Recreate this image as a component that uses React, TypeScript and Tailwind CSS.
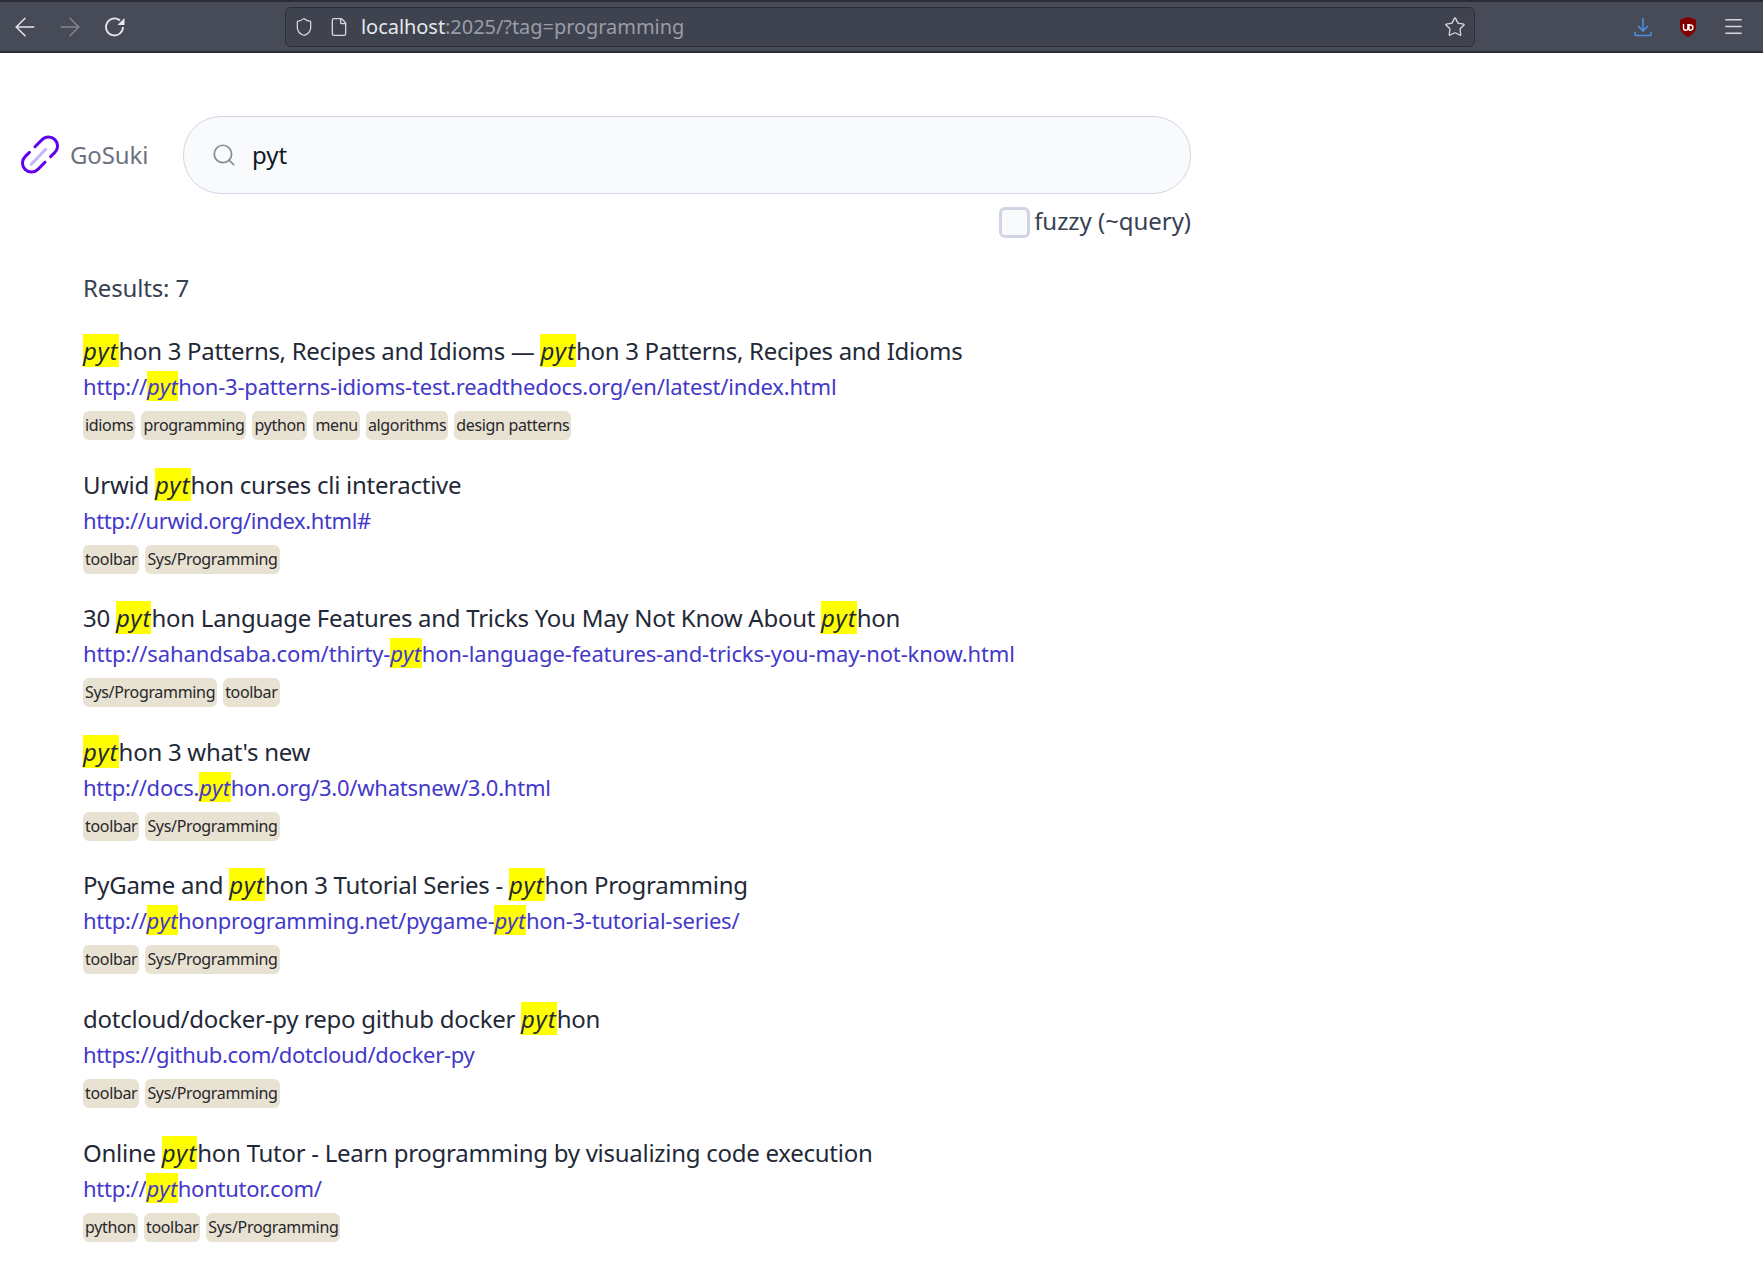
import React from 'react'
import { ArrowLeft, ArrowRight, Shield, File, Star, Menu, Search } from 'lucide-react'

const results = [
  {
    title: 'python 3 Patterns, Recipes and Idioms — python 3 Patterns, Recipes and Idioms',
    titleClass: 'tracking-[-0.32px]',
    url: 'http://python-3-patterns-idioms-test.readthedocs.org/en/latest/index.html',
    urlClass: 'tracking-[-0.2px]',
    tags: ['idioms', 'programming', 'python', 'menu', 'algorithms', 'design patterns'],
  },
  {
    title: 'Urwid python curses cli interactive',
    titleClass: 'tracking-[-0.27px]',
    url: 'http://urwid.org/index.html#',
    urlClass: 'tracking-[-0.38px]',
    tags: ['toolbar', 'Sys/Programming'],
  },
  {
    title: '30 python Language Features and Tricks You May Not Know About python',
    titleClass: 'tracking-[-0.27px]',
    url: 'http://sahandsaba.com/thirty-python-language-features-and-tricks-you-may-not-know.html',
    urlClass: 'tracking-[-0.13px]',
    tags: ['Sys/Programming', 'toolbar'],
  },
  {
    title: "python 3 what's new",
    titleClass: 'tracking-[-0.27px]',
    url: 'http://docs.python.org/3.0/whatsnew/3.0.html',
    urlClass: 'tracking-[-0.24px]',
    tags: ['toolbar', 'Sys/Programming'],
  },
  {
    title: 'PyGame and python 3 Tutorial Series - python Programming',
    titleClass: 'tracking-[-0.27px]',
    url: 'http://pythonprogramming.net/pygame-python-3-tutorial-series/',
    urlClass: 'tracking-[-0.24px]',
    tags: ['toolbar', 'Sys/Programming'],
  },
  {
    title: 'dotcloud/docker-py repo github docker python',
    titleClass: 'tracking-[-0.27px]',
    url: 'https://github.com/dotcloud/docker-py',
    urlClass: 'tracking-[-0.34px]',
    tags: ['toolbar', 'Sys/Programming'],
  },
  {
    title: 'Online python Tutor - Learn programming by visualizing code execution',
    titleClass: 'tracking-[-0.27px]',
    url: 'http://pythontutor.com/',
    urlClass: 'tracking-[-0.27px]',
    tags: ['python', 'toolbar', 'Sys/Programming'],
  },
]

function Highlight({ text, markClass }: { text: string; markClass: string }) {
  const parts = text.split(/(pyt(?=hon))/)
  return (
    <>
      {parts.map((p, i) =>
        p === 'pyt' ? (
          <mark key={i} className={`bg-[#ffff00] italic text-inherit ${markClass}`}>pyt</mark>
        ) : (
          <span key={i}>{p}</span>
        )
      )}
    </>
  )
}

function Toolbar() {
  return (
    <div className="flex h-[53px] items-center border-y-2 border-t-[#2b2e38] border-b-[#2b2e38] bg-[#474b58] pl-[10px] pr-[17px]">
      <ArrowLeft className="h-[30px] w-[30px] text-[#e5e7eb]" strokeWidth={1.2} />
      <ArrowRight className="ml-[15px] h-[30px] w-[30px] text-[#83868f]" strokeWidth={1.2} />
      <svg viewBox="0 0 24 24" className="ml-[18px] h-[24px] w-[24px]" fill="none" stroke="#e5e7eb" strokeWidth="1.8">
        <path d="M20 12a8.500 8.500 0 1 1-3-6.500" />
        <path d="M21.500 3v7h-7z" fill="#e5e7eb" stroke="none" />
      </svg>
      <div className="ml-[158px] flex h-[40px] w-[1190px] items-center rounded-md border border-[#2b2e38] bg-[#3f434f] pl-[8px] pr-[8px]">
        <Shield className="h-[20px] w-[20px] text-[#d6d8dd]" strokeWidth={1.5} />
        <File className="ml-[15px] h-[20px] w-[20px] text-[#d6d8dd]" strokeWidth={1.6} />
        <div className="ml-[12px] pt-[1px] text-[20px] tracking-[-0.05px] text-[#e5e7eb]">
          localhost<span className="text-[#9a9da6]">:2025/?tag=programming</span>
        </div>
        <Star className="ml-auto h-[22px] w-[22px] text-[#d6d8dd]" strokeWidth={1.4} />
      </div>
      <svg viewBox="0 0 18 20" className="ml-[159px] h-[20px] w-[18px]" fill="none" stroke="#4a90e2" strokeWidth="1.6">
        <path d="M9 1v13M4 9l5 5 5-5M1 15v2.500a1 1 0 0 0 1 1h14a1 1 0 0 0 1-1V15" />
      </svg>
      <svg viewBox="0 0 18 20" className="ml-[27px] h-[20px] w-[18px]">
        <path d="M9 0l8 2.500v8c0 4-4 7.500-8 9.500-4-2-8-5.500-8-9.500v-8z" fill="#800000" />
        <path d="M4.500 7v4a2.200 2.200 0 0 0 4.400 0V7M10 7v6.200M10 8h1.300a2.600 2.600 0 0 1 0 5.200H10" fill="none" stroke="#fff" strokeWidth="1.4" />
      </svg>
      <Menu className="ml-[25px] h-[23px] w-[23px] text-[#d6d8dd]" strokeWidth={1.4} />
    </div>
  )
}

export default function App() {
  return (
    <div className="min-h-[1282px] bg-white font-['Noto_Sans',sans-serif] text-[#1f2937]">
      <Toolbar />
      <div className="flex items-center pl-[14px] pt-[63px]">
        <svg viewBox="0 0 50 48" className="h-[48px] w-[50px]" fill="none" strokeLinecap="round">
          <path d="M21 15.800L28.100 8.600A9 9 0 0 1 40.900 21.400L36.600 25.600" stroke="#6200ee" strokeWidth="3" />
          <path d="M31 31.200L23.900 38.400A9 9 0 0 1 11.100 25.600L15.400 21.400" stroke="#6200ee" strokeWidth="3" />
          <path d="M17.300 33.300L31.700 18.300" stroke="#c4b5fd" strokeWidth="3" />
        </svg>
        <div className="ml-[6px] w-[113px] text-[24px] tracking-[-0.1px] text-[#6b7280]">GoSuki</div>
        <div className="flex h-[78px] w-[1008px] items-center rounded-[38px] border border-[#d1d5e3] bg-[#f9fafb] pl-[27px]">
          <Search className="h-[26px] w-[26px] text-[#868c98]" strokeWidth={1.6} />
          <div className="ml-[15px] text-[24px] text-[#111827]">pyt</div>
        </div>
      </div>
      <div className="ml-[999px] mt-[12px] flex w-[192px] items-start justify-between">
        <div className="mt-[1px] h-[31px] w-[31px] rounded-md border-[3px] border-[#d1d5e3] bg-[#f9fafb]" />
        <div className="text-[24px] leading-[30px] tracking-[-0.05px] text-[#374151]">fuzzy (~query)</div>
      </div>
      <div className="pl-[83px] pt-[32px]">
        <div className="text-[24px] leading-[36px] tracking-[-0.15px] text-[#374151]">Results: 7</div>
        <div className="mt-[26px] flex flex-col gap-[25.6px]">
          {results.map((r) => (
            <div key={r.url} className="h-[108px]">
              <div className={`text-[24px] leading-[37px] ${r.titleClass}`}><Highlight text={r.title} markClass="tracking-[1px]" /></div>
              <div className={`-mt-[1px] text-[22px] leading-[36px] text-[#4338ca] ${r.urlClass}`}><Highlight text={r.url} markClass="tracking-[0.5px]" /></div>
              <div className="mt-[7px] flex gap-[6px]">
                {r.tags.map((t) => (
                  <span key={t} className="rounded-md bg-[#e8e2d3] px-[2px] text-[16px] leading-[29px] tracking-[-0.33px] text-[#27272a]">{t}</span>
                ))}
              </div>
            </div>
          ))}
        </div>
      </div>
    </div>
  )
}
